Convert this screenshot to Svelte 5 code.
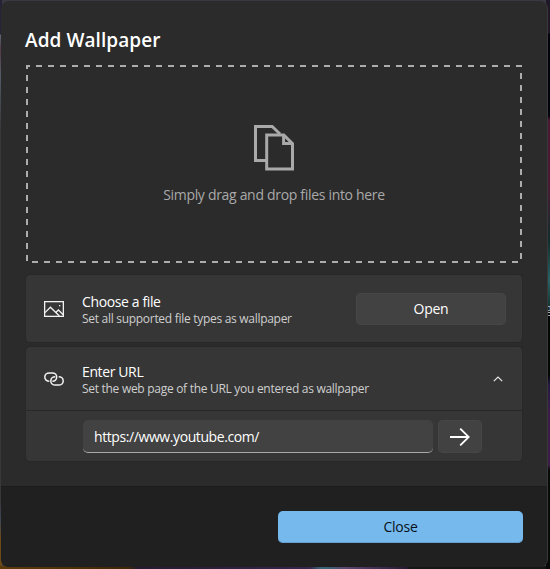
<script>
  let url = $state('https://www.youtube.com/');
</script>

<div class="backdrop">
  <div class="glyph-behind">g</div>
  <div class="dialog">
    <main>
      <h1><span>Add Wallpaper</span></h1>
      <section class="drop">
        <svg class="dashes" width="496" height="198" viewBox="0 0 496 198">
          <rect x="1" y="1" width="494" height="196" fill="none" stroke="#acacac" stroke-width="2" stroke-dasharray="6 6" stroke-dashoffset="3" />
        </svg>
        <svg class="files" width="40" height="46" viewBox="0 0 40 46" fill="none" stroke="#a9a9a9" stroke-width="3">
          <path d="M12 35.5H1.5V1.5H18.2L26 9" />
          <path d="M12.7 10H29.8L38.5 18.7V43.9H12.7Z" />
          <path d="M29.6 10V18.6H38.5" />
        </svg>
        <p>Simply drag and drop files into here</p>
      </section>

      <section class="card file">
        <svg class="icon" width="20" height="16" viewBox="0 0 20 16" fill="none" stroke="#f2f2f2" stroke-width="1.3">
          <rect x=".65" y=".65" width="18.7" height="14.7" />
          <path d="M1 11.6L6.4 6.2L15.4 15M11.8 11.5L14.4 9L19.2 13.8" />
          <rect x="15" y="4" width="1.3" height="1.3" fill="#f2f2f2" stroke="none" />
        </svg>
        <div class="copy">
          <h2>Choose a file</h2>
          <small>Set all supported file types as wallpaper</small>
        </div>
        <button class="open">Open</button>
      </section>

      <section class="card link">
        <div class="head">
          <svg class="icon" width="20" height="14" viewBox="0 0 20 14" fill="none" stroke="#f2f2f2" stroke-width="1.5">
            <path d="M5.3 9.3C2.8 9.3.8 7.6.8 5.1S2.8.9 5.3.9H8.3C10.8.9 12.7 2.7 12.7 5.1S10.8 9.3 8.4 9.3" />
            <path d="M14.7 4.7C17.2 4.7 19.2 6.4 19.2 8.9S17.2 13.1 14.7 13.1H11.3C8.8 13.1 6.8 11.3 6.8 8.9S8.8 4.7 11.3 4.7" />
          </svg>
          <div class="copy">
            <h2>Enter URL</h2>
            <small class="long">Set the web page of the URL you entered as wallpaper</small>
          </div>
          <svg class="chevron" width="10" height="6" viewBox="0 0 10 6" fill="none" stroke="#e8e8e8" stroke-width="1.2"><path d="M.8 5.2L5 1L9.2 5.2" /></svg>
        </div>
        <div class="entry">
          <input type="text" bind:value={url} aria-label="URL" spellcheck="false" />
          <button class="go" aria-label="Go">
            <svg width="20" height="18" viewBox="0 0 20 18" fill="none" stroke="#fff" stroke-width="1.8"><path d="M0 9H19M10.2 .6L18.8 9L10.2 17.4" /></svg>
          </button>
        </div>
      </section>
    </main>
    <footer><button class="close">Close</button></footer>
  </div>
</div>

<style>
  :global(body) { margin: 0; background: #0b0a10; }
  * { box-sizing: border-box; }
  .backdrop {
    position: relative;
    width: 550px; height: 569px; padding: 1px 2px 2px 1px; overflow: hidden;
    font-family: "Open Sans", "Noto Sans", sans-serif;
    background:
      linear-gradient(#201828 0 33px, #03020d 34px 116px, #4b1834 120px 185px, #102d2d 240px, #286263 280px, #153838 305px, #050505 315px 375px, #241a42 385px, #3b1d48 410px 465px, #090909 470px) right / 4px 100% no-repeat,
      linear-gradient(90deg, #593b0b 0 12px, #3c2805 128px, #241b32 138px, #35264b 310px, #386474 320px 328px, #5c4770 345px, #271b36 405px, #171717 410px) bottom / 100% 3px no-repeat,
      linear-gradient(#282237 0 34px, #5c6672 35px, #533b46 50px, #535b66 75px, #38383a 130px 500px, #414653 520px, #6c4a16 540px) left / 2px 100% no-repeat,
      #3a3843;
  }
  .glyph-behind { position: absolute; left: 545px; top: 299px; font-size: 13px; line-height: 18px; color: #aaa; }
  .dialog { position: relative; width: 547px; height: 566px; border-radius: 8px; overflow: hidden; background: #2b2b2b; border-right: 1px solid #393939; display: flex; flex-direction: column; }
  main { height: 485px; padding: 24px 0 0 25px; flex: none; }
  h1 { margin: 0 0 0 -1px; height: 40px; font-size: 19px; line-height: 30px; font-weight: 600; color: #fff; white-space: nowrap; letter-spacing: .07px; }
  .drop { position: relative; width: 496px; height: 198px; display: flex; flex-direction: column; align-items: center; padding-top: 60px; }
  .dashes { position: absolute; inset: 0; }
  .files { display: block; }
  .drop p { margin: 14px 0 0; font-size: 14px; line-height: 20px; color: #a9a9a9; white-space: nowrap; letter-spacing: -.31px; }
  .card { width: 496px; background: #363636; border-radius: 4px; box-shadow: 0 0 0 1px #282828; }
  .file { margin-top: 12px; height: 67px; display: flex; align-items: center; padding: 0 16px 0 18px; }
  .icon { display: block; flex: none; }
  .copy { margin-left: 18px; padding-top: 2px; flex: 1; white-space: nowrap; }
  h2 { margin: 0; font-size: 14px; line-height: 19px; font-weight: 400; color: #fff; letter-spacing: -.38px; }
  small { display: block; font-size: 12px; line-height: 16px; color: #cfcfcf; letter-spacing: -.29px; }
  button { border: 0; padding: 0; font: 14px/20px "Open Sans", "Noto Sans", sans-serif; letter-spacing: -.25px; border-radius: 5px; color: #fff; background: #424242; }
  .open { width: 150px; height: 32px; box-shadow: inset 0 0 0 1px #464646; }
  .link { margin-top: 5px; height: 114px; }
  .head { height: 64px; padding: 0 19px 0 18px; display: flex; align-items: center; border-bottom: 1px solid #292929; }
  .entry { padding: 9px 0 0 57px; display: flex; gap: 5px; }
  input { width: 350px; height: 33px; padding: 0 11px; border: 0; border-bottom: 1px solid #a9a9a9; border-radius: 5px; outline: 0; background: #424242; color: #fff; font: 14px/20px "Open Sans", "Noto Sans", sans-serif; letter-spacing: -.41px; }
  .go { width: 44px; height: 33px; display: flex; align-items: center; justify-content: center; box-shadow: inset 0 0 0 1px #464646; }
  footer { height: 81px; background: #202020; border-top: 1px solid #1c1c1c; padding: 24px 24px 0 0; display: flex; justify-content: flex-end; }
  .close { width: 245px; height: 32px; color: #08121b; background: #76b9ed; box-shadow: inset 0 -1px #649fcd; }
</style>
